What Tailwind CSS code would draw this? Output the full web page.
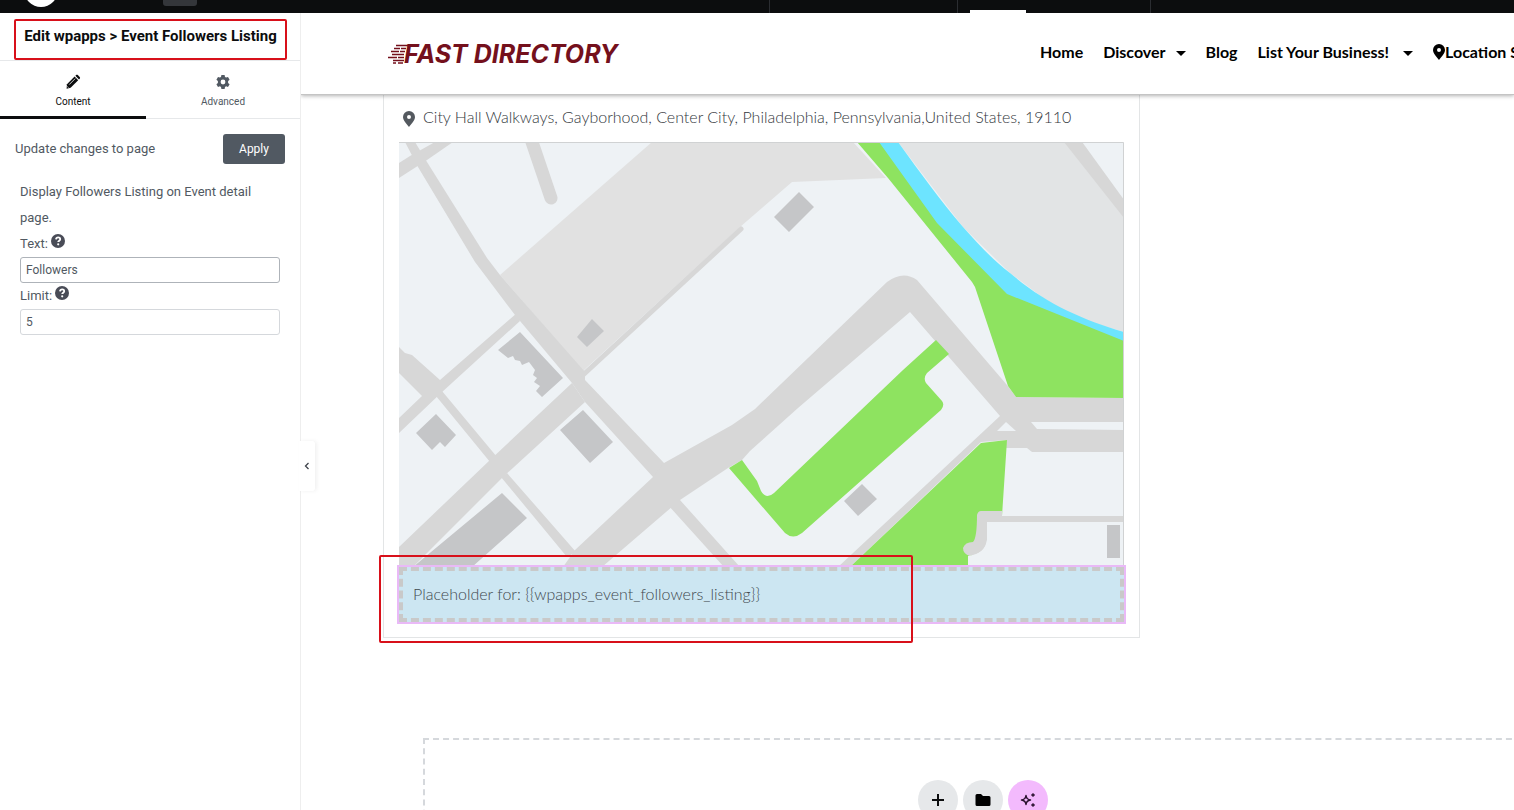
<!DOCTYPE html>
<html lang="en">
<head>
<meta charset="utf-8">
<meta name="viewport" content="width=device-width, initial-scale=1">
<title>Edit wpapps</title>
<script src="https://cdn.jsdelivr.net/npm/@tailwindcss/browser@4"></script>
</head>
<body class="relative flex h-screen flex-col overflow-hidden bg-white font-['Roboto',sans-serif] text-[#515962]">

<!-- Editor top bar -->
<div class="flex h-[13px] shrink-0 items-start overflow-hidden bg-[#0c0d0e]">
  <div class="ml-6 h-[7px] w-[34px] shrink-0 overflow-hidden"><div class="-mt-[27px] size-[34px] rounded-full bg-white"></div></div>
  <div class="ml-[105px] h-[6px] w-[34px] shrink-0 rounded-b-[3px] bg-[#34363a]"></div>
  <div class="ml-[572px] h-[13px] w-px shrink-0 bg-[#2b2d31]"></div>
  <div class="ml-[187px] h-[13px] w-px shrink-0 bg-[#2b2d31]"></div>
  <div class="ml-3 h-[3px] w-14 shrink-0 self-end bg-white"></div>
  <div class="ml-[124px] h-[13px] w-px shrink-0 bg-[#2b2d31]"></div>
</div>

<div class="flex min-h-0 flex-1">
  <!-- Widget settings panel -->
  <aside class="relative z-20 w-[301px] shrink-0 border-r border-[#eeeeee] bg-white text-[13px]">
    <header class="h-12 border-b border-[#e6e8ea] px-[14px] pt-[6px]">
      <h1 class="h-[41px] w-[273px] rounded-[2px] border-2 border-[#d8101a] pt-[5px] text-center text-[15px] leading-5 font-bold whitespace-nowrap text-[#0c0d0e]">Edit wpapps &gt; Event Followers Listing</h1>
    </header>
    <nav class="flex h-[58px] border-b border-[#e6e8ea] text-[10px]">
      <button class="-mb-px flex w-[146px] flex-col items-center border-b-[3px] border-[#0c0d0e] pt-[13px] text-[#0c0d0e]">
        <svg class="size-4" viewBox="0 0 16 16" fill="currentColor"><path d="M2 10.200 9.600 2.600l3.600 3.600-7.600 7.600-4 1z"/><path d="m10.400 1.800.7-.7c.5-.5 1.200-.5 1.700 0l1.900 1.900c.5.5.5 1.200 0 1.700l-.7.7z"/><path d="m4.200 10.600 6-6M2.200 12.400l1.200 1.200" stroke="#fff" stroke-width=".8"/></svg>
        <span class="mt-1 leading-4">Content</span>
      </button>
      <button class="flex flex-1 flex-col items-center pt-[13px]">
        <svg class="size-4" viewBox="0 0 16 16" fill="currentColor" fill-rule="evenodd"><path d="M6.400 1h3.200l.4 2 1.100.6 1.900-.7 1.600 2.800-1.500 1.300v1.900l1.500 1.300-1.600 2.800-1.900-.7-1.100.6-.4 2.100H6.400l-.4-2.100-1.100-.6-1.900.7-1.600-2.800 1.500-1.300V7L1.400 5.700 3 2.900l1.900.7L6 3zM8 5.600a2.400 2.400 0 1 0 0 4.800 2.400 2.400 0 0 0 0-4.800z"/></svg>
        <span class="mt-1 leading-4">Advanced</span>
      </button>
    </nav>
    <div class="flex items-center justify-between px-[15px] pt-[15px]">
      <span>Update changes to page</span>
      <button class="h-[30px] w-[62px] rounded-[3px] bg-[#515962] text-xs text-white">Apply</button>
    </div>
    <form class="px-5 pt-[15px] leading-[26px]">
      <p>Display Followers Listing on Event detail page.</p>
      <label for="w-text" class="flex h-[26px] gap-[3px]">Text:
        <svg class="mt-[3px] size-[14px]" viewBox="0 0 14 14"><circle cx="7" cy="7" r="7" fill="#494c57"/><path d="M5 5.300C5.200 3.900 6.200 3.400 7.200 3.400s2 .6 2 1.800c0 1.500-2 1.500-2 2.900" fill="none" stroke="#fff" stroke-width="1.800"/><circle cx="7.200" cy="10.300" r="1.100" fill="#fff"/></svg></label>
      <input id="w-text" type="text" value="Followers" class="block h-[26px] w-full rounded-[3px] border border-[#aeb3b9] px-[5px] text-xs">
      <label for="w-limit" class="flex h-[26px] gap-[3px]">Limit:
        <svg class="mt-[3px] size-[14px]" viewBox="0 0 14 14"><circle cx="7" cy="7" r="7" fill="#494c57"/><path d="M5 5.300C5.200 3.900 6.200 3.400 7.200 3.400s2 .6 2 1.800c0 1.500-2 1.500-2 2.900" fill="none" stroke="#fff" stroke-width="1.800"/><circle cx="7.200" cy="10.300" r="1.100" fill="#fff"/></svg></label>
      <input id="w-limit" type="text" value="5" class="block h-[26px] w-full rounded-[3px] border border-[#d5d8dc] px-[5px] text-xs">
    </form>
    <button aria-label="Collapse panel" class="absolute top-[428px] left-[299px] flex h-[50px] w-4 items-center justify-center rounded-r-[3px] bg-white shadow-[2px_0_4px_rgba(0,0,0,0.06)]">
      <svg class="size-2" viewBox="0 0 8 8" fill="none" stroke="#3f444b" stroke-width="1.300"><path d="M5.500 1 2.500 4l3 3"/></svg>
    </button>
  </aside>

  <!-- Page preview -->
  <main class="relative min-w-0 flex-1 overflow-hidden font-['Lato',sans-serif]">
    <header class="relative z-10 flex h-[82px] items-center overflow-hidden border-b border-[#c4c4c4] bg-white pb-1 pl-[87px] shadow-[0_1px_4px_rgba(0,0,0,0.3)]">
      <a href="#" class="flex shrink-0 items-center pt-1 font-['Inter',sans-serif] text-[25px] leading-8 font-bold whitespace-nowrap text-[#74101c] italic">
        <svg class="-mr-1 h-5 w-5" viewBox="0 0 20 20" stroke="currentColor" stroke-width="1.400"><path d="M8 1.500h12M6 4.500h6m1 0h5M3 7.500h8m1 0h5M4 10.500h12M0 13.500h9m1 0h6M5 16.500h11M5 19h3m2 0h5"/></svg>FAST DIRECTORY</a>
      <nav class="ml-auto flex w-[474px] shrink-0 items-center gap-5 text-[16px] font-bold whitespace-nowrap text-black">
        <a href="#">Home</a>
        <a href="#" class="flex items-center gap-[10px]">Discover<svg class="mt-[3px] h-[5px] w-[10px]" viewBox="0 0 10 5"><path d="M0 0h10L5 5z"/></svg></a>
        <a href="#">Blog</a>
        <a href="#" class="flex items-center gap-[14px]">List Your Business!<svg class="mt-[3px] h-[5px] w-[10px]" viewBox="0 0 10 5"><path d="M0 0h10L5 5z"/></svg></a>
        <a href="#" class="flex items-center"><svg class="h-4 w-3" viewBox="0 0 12 16"><path fill-rule="evenodd" d="M6 0a6 6 0 0 1 6 6c0 3.200-3.500 7-6 10-2.500-3-6-6.800-6-10a6 6 0 0 1 6-6zm0 4a2 2 0 1 0 0 4 2 2 0 0 0 0-4z"/></svg>Location S</a>
      </nav>
    </header>

    <section class="ml-[82px] w-[757px] border-x border-b border-[#e3e5e6] px-[15px] pb-[15px]">
      <p class="flex h-[47px] items-center gap-2 pb-[3px] pl-1 text-[16px] font-light whitespace-nowrap text-[#33383d]">
        <svg class="mt-1 h-4 w-3" viewBox="0 0 12 16" fill="#54595f"><path fill-rule="evenodd" d="M6 0a6 6 0 0 1 6 6c0 3.200-3.500 7-6 10-2.500-3-6-6.800-6-10a6 6 0 0 1 6-6zm0 4a2 2 0 1 0 0 4 2 2 0 0 0 0-4z"/></svg>
        <span>City Hall Walkways, Gayborhood, Center City, Philadelphia, Pennsylvania,United States, 19110</span>
      </p>
      <svg class="block h-[425px] w-full" viewBox="399 142 725 425" preserveAspectRatio="none" role="img" aria-label="Map">
        <rect x="399" y="142" width="725" height="425" fill="#eef2f5"/>
        <!-- Blocks -->
        <path fill="#e1e1e1" d="M652 142H853L886 178 792 182 740 227 583 371 500 275z"/>
        <path fill="#e2e4e5" d="M898 142H1124V332L1083 320 1050 303 1010 273 963 227z"/>
        <path fill="#eef2f5" d="M1082 142h42v58z"/>
        <!-- Roads -->
        <g fill="#d7d7d7">
          <path d="M1064 142h18L1124 200v18z"/>
          <path d="M405 142H415L427 162 487 258 500 275 585 372V380L664 463 680 500 740 567H724L668 505 653 477 585 402 572 383 515 315 475 262 418 167z"/>
          <path d="M399 163 410 156 435 142H453L427 160 399 178z"/>
          <path d="M517 313 440 380 412 355 405 353 399 347V373L422 396 399 418V433L441 393 520 321z"/>
          <path d="M436 396 442 391 497 457 490 462zM501 477 507 473 576 552 567 557z"/>
          <path d="M399 547 490 460 572 383 585 402 503 477 413 567H399z"/>
          <path d="M563 567 575 550 653 477 664 463 732 425 755 409 887 282Q903 270 917 280L1007 385 1016 397 1124 398V422H1031L1037 429 1124 430V452H1032L1027 448H1005L1007 440 981 442 850 567H838L1000 416 910 312 798 408 750 451 742 460 728 468 680 500 602 567z"/>
        </g>
        <g fill="none" stroke="#d7d7d7" stroke-linecap="round"><path stroke-width="13" d="M531 139 551 198"/><path stroke-width="5" d="M741 229 583 375"/></g>
        <path fill="#eef2f5" d="M997 431 1006 422 1016 431z"/>
        <!-- Parks and river -->
        <g fill="#8ee360">
          <path d="M857 142H880L937 221 1007 292 1124 340V398L1016 397 1008 386 975 287 972 282 888 178z"/>
          <path d="M936 340 949 354 927 373Q923 378 926 383L942 401Q945 405 941 410L802 533Q793 540 785 533L729 468 742 460 757 481 761 491Q766 500 774 493L903 370z"/>
          <path d="M850 567 981 443 1007 440 1002 516 980 530 968 567z"/>
        </g>
        <path fill="#6de4ff" d="M879 142H898C922 175 940 200 963 227 980 246 993 260 1010 273 1045 303 1080 319 1124 332V341L1007 294 937 223z"/>
        <path fill="#d7d7d7" d="M981 511H1002V516H1124V522H987V540Q986 553 970 556 963 554 963 548 965 542 973 542 977 538 977 515 978 511 981 511z"/>
        <path fill="#eef2f5" d="M987 522H1124V567H968V556Q985 554 987 540z"/>
        <!-- Buildings -->
        <g fill="#c5c6c8">
          <path d="M799 192 814 207 789 232 774 217zM592 319 604 331 587 347 577 337z"/>
          <path d="M520 332 563 378 542 397 536 391 540 386 534 382 537 378 533 375 535 370 529 362 522 365 520 361 515 360 513 356 508 358 498 350z"/>
          <path d="M583 410 613 442 590 463 560 430zM436 414 456 435 445 447 440 442 432 450 416 433z"/>
          <path d="M502 493 527 518 472 567H413zM862 484 877 499 858 516 844 501zM1107 525h13v33h-13z"/>
        </g>
        <path fill="none" stroke="#d0d2d3" d="M399 142.500H1123.500V567"/>
      </svg>
      <div class="flex h-[55px] items-center border-4 border-dashed border-[#c9c9c9] bg-[#cce6f2] pb-[2px] pl-[10px] text-[16px] font-light text-[#41494f] outline-2 outline-[#e9b9f7]">Placeholder for: {{wpapps_event_followers_listing}}</div>
    </section>

    <!-- Highlight over the placeholder -->
    <div class="pointer-events-none absolute top-[542px] left-[78px] h-[88px] w-[534px] rounded-[2px] border-2 border-[#d8101a]"></div>

    <section class="mt-[100px] ml-[122px] flex h-40 w-[1119px] justify-center gap-[5px] border-2 border-dashed border-[#d5d8dc] pt-10">
      <button aria-label="Add element" class="flex size-10 items-center justify-center rounded-full bg-[#e6e8ea]"><svg class="size-3" viewBox="0 0 12 12" stroke="#0c0d0e" stroke-width="2"><path d="M6 0v12M0 6h12"/></svg></button>
      <button aria-label="Add template" class="flex size-10 items-center justify-center rounded-full bg-[#e6e8ea]"><svg class="h-3 w-4" viewBox="0 0 16 12"><path d="M2 0h4l2 2h6q1.500 0 1.500 1.500v7q0 1.500-1.500 1.500H2Q.5 12 .5 10.500v-9Q.5 0 2 0z"/></svg></button>
      <button aria-label="Build with AI" class="flex size-10 items-center justify-center rounded-full bg-[#f3bafd]"><svg class="size-4" viewBox="0 0 16 16" fill="none" stroke="#2b1230" stroke-width="1.500" stroke-linejoin="round"><path d="M6 3.500Q6.500 7.500 10.500 8 6.500 8.500 6 12.500 5.500 8.500 1.500 8 5.500 7.500 6 3.500z"/><path fill="#2b1230" stroke-width="1" d="m13 1.500 1.500 1.500L13 4.500 11.500 3zM13 11.500l1.500 1.500-1.500 1.500-1.500-1.500z"/></svg></button>
    </section>
  </main>
</div>
</body>
</html>
